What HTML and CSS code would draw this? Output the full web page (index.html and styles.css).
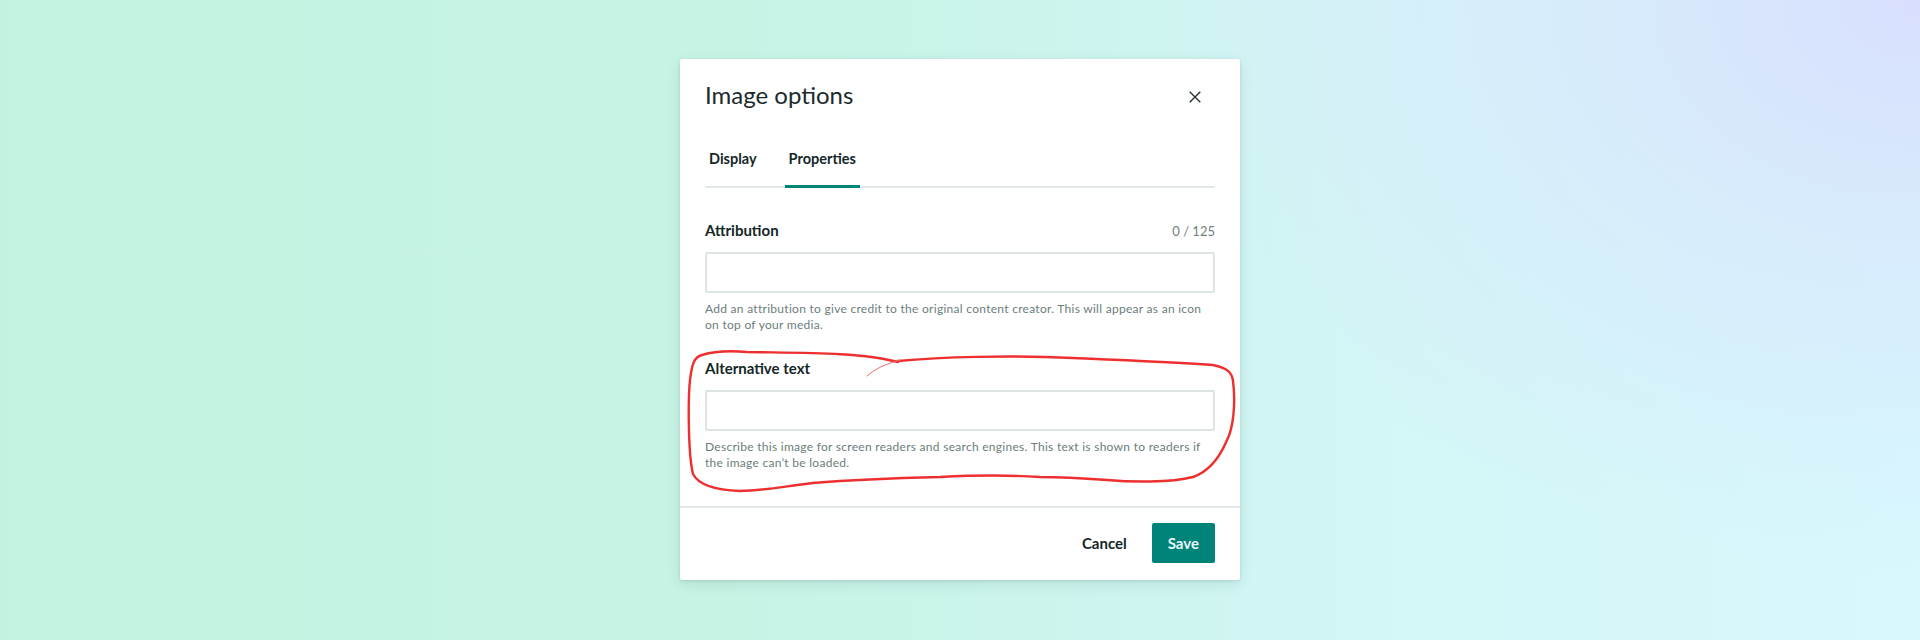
FILE: index.html
```html
<!DOCTYPE html>
<html lang="en">
<head>
<meta charset="utf-8">
<title>Image options</title>
<link rel="stylesheet" href="styles.css">
</head>
<body>
<div class="stage">
  <div class="dialog" role="dialog" aria-labelledby="dlg-title">
    <div class="dialog-body">
      <div class="dialog-header">
        <h1 class="dialog-title" id="dlg-title">Image options</h1>
        <button class="close-btn" aria-label="Close">
          <svg width="12" height="12" viewBox="0 0 12 12" aria-hidden="true"><path d="M0.7 0.7 L11.3 11.3 M11.3 0.7 L0.7 11.3" stroke="#1d2b2b" stroke-width="1.3" fill="none"/></svg>
        </button>
      </div>
      <div class="tabs" role="tablist">
        <button class="tab" role="tab">Display</button>
        <button class="tab tab-active" role="tab">Properties</button>
      </div>
      <div class="field field-first">
        <div class="field-head">
          <label class="field-label">Attribution</label>
          <span class="field-count">0 / 125</span>
        </div>
        <div class="field-input"></div>
        <p class="field-help">Add an attribution to give credit to the original content creator. This will appear as an icon on top of your media.</p>
      </div>
      <div class="field field-second">
        <div class="field-head">
          <label class="field-label">Alternative text</label>
        </div>
        <div class="field-input"></div>
        <p class="field-help">Describe this image for screen readers and search engines. This text is shown to readers if the image can’t be loaded.</p>
      </div>
    </div>
    <div class="dialog-footer">
      <button class="btn-cancel">Cancel</button>
      <button class="btn-save">Save</button>
    </div>
    <svg class="annotation" width="560" height="521" viewBox="0 0 560 521" aria-hidden="true">
      <path d="M218 302 C260 298 330 296 393 299 C440 301 490 303 533 306 C548 309 552 314 553 322 C556 345 553 370 547 381 C540 398 530 412 513 418 C490 424 450 423 427 421 C400 419 380 418 360 418 C330 416 300 416 260 418 C220 419 170 421 133 424 C100 428 80 432 60 432 C35 431 18 425 13 415 C8 395 8 340 10 321 C12 305 14 298 22 296 C35 292 55 292 67 293 C120 294 180 293 218 303" fill="none" stroke="#ee2f2f" stroke-width="2.4" stroke-linecap="round" stroke-linejoin="round"/>
      <path d="M220 301 C205 305 195 310 187 317" fill="none" stroke="#f06a6a" stroke-width="1" stroke-linecap="round"/>
    </svg>
  </div>
</div>
</body>
</html>
```

FILE: styles.css
```css
html, body {
  margin: 0;
  padding: 0;
}

body {
  width: 1920px;
  height: 640px;
  overflow: hidden;
  font-family: "Lato", "Noto Sans", sans-serif;
  background:
    radial-gradient(ellipse 40% 90% at 100% 0%, rgba(216, 223, 253, 1) 0%, rgba(216, 228, 252, 0.6) 45%, rgba(214, 240, 250, 0) 100%),
    linear-gradient(90deg, #c4f2e0 0%, #c6f3e4 35%, #ccf4ed 55%, #d3f6f6 72%, #d7f8fd 100%);
}

.stage {
  display: flex;
  justify-content: center;
  padding-top: 59px;
}

.dialog {
  position: relative;
  width: 560px;
  height: 521px;
  box-sizing: border-box;
  background: #ffffff;
  border-radius: 2px;
  box-shadow: 0 1px 3px rgba(20, 60, 60, 0.12), 0 4px 14px rgba(20, 60, 60, 0.10);
  display: flex;
  flex-direction: column;
}

.dialog-body {
  padding: 20px 25px 0;
  height: 449px;
  box-sizing: border-box;
  border-bottom: 2px solid #e2e9e8;
}

.dialog-header {
  display: flex;
  align-items: center;
  justify-content: space-between;
  height: 32px;
}

.dialog-title {
  margin: 0;
  font-size: 24px;
  line-height: 32px;
  font-weight: 400;
  color: #1b2b2b;
}

.close-btn {
  width: 24px;
  height: 24px;
  margin: 3px 8px 0 0;
  padding: 0;
  border: 0;
  background: transparent;
  display: flex;
  align-items: center;
  justify-content: center;
}

.tabs {
  display: flex;
  gap: 24px;
  margin-top: 38px;
  border-bottom: 2px solid #e2e9e8;
}

.tab {
  font-family: inherit;
  font-size: 14.5px;
  line-height: 20px;
  font-weight: 700;
  color: #152828;
  background: transparent;
  border: 0;
  border-bottom: 3px solid transparent;
  margin-bottom: -2px;
  padding: 0 4px 16px;
}

.tab-active {
  border-bottom-color: #00857a;
}

.field-first {
  margin-top: 32px;
}

.field-second {
  margin-top: 25px;
}

.field-head {
  display: flex;
  align-items: baseline;
  justify-content: space-between;
  height: 20px;
}

.field-label {
  font-size: 15px;
  line-height: 20px;
  font-weight: 700;
  color: #132727;
}

.field-count {
  font-size: 13px;
  line-height: 20px;
  color: #6f7f7f;
}

.field-input {
  margin-top: 12px;
  height: 41px;
  box-sizing: border-box;
  border: 2px solid #dde5e4;
  border-radius: 2px;
  background: #ffffff;
}

.field-help {
  margin: 8px 0 0;
  font-size: 12px;
  line-height: 16px;
  letter-spacing: 0.28px;
  color: #6b7d7c;
}

.dialog-footer {
  display: flex;
  justify-content: flex-end;
  align-items: center;
  padding: 15px 25px 0;
}

.btn-cancel {
  font-family: inherit;
  font-size: 15px;
  line-height: 20px;
  font-weight: 700;
  color: #132727;
  background: transparent;
  border: 0;
  padding: 10px 12px;
  margin-right: 13px;
}

.btn-save {
  font-family: inherit;
  font-size: 15px;
  line-height: 20px;
  font-weight: 700;
  color: #e8f7f5;
  background: #00847a;
  border: 0;
  border-radius: 2px;
  height: 40px;
  padding: 0 16px;
}

.annotation {
  position: absolute;
  left: 0;
  top: 0;
  pointer-events: none;
}
```
